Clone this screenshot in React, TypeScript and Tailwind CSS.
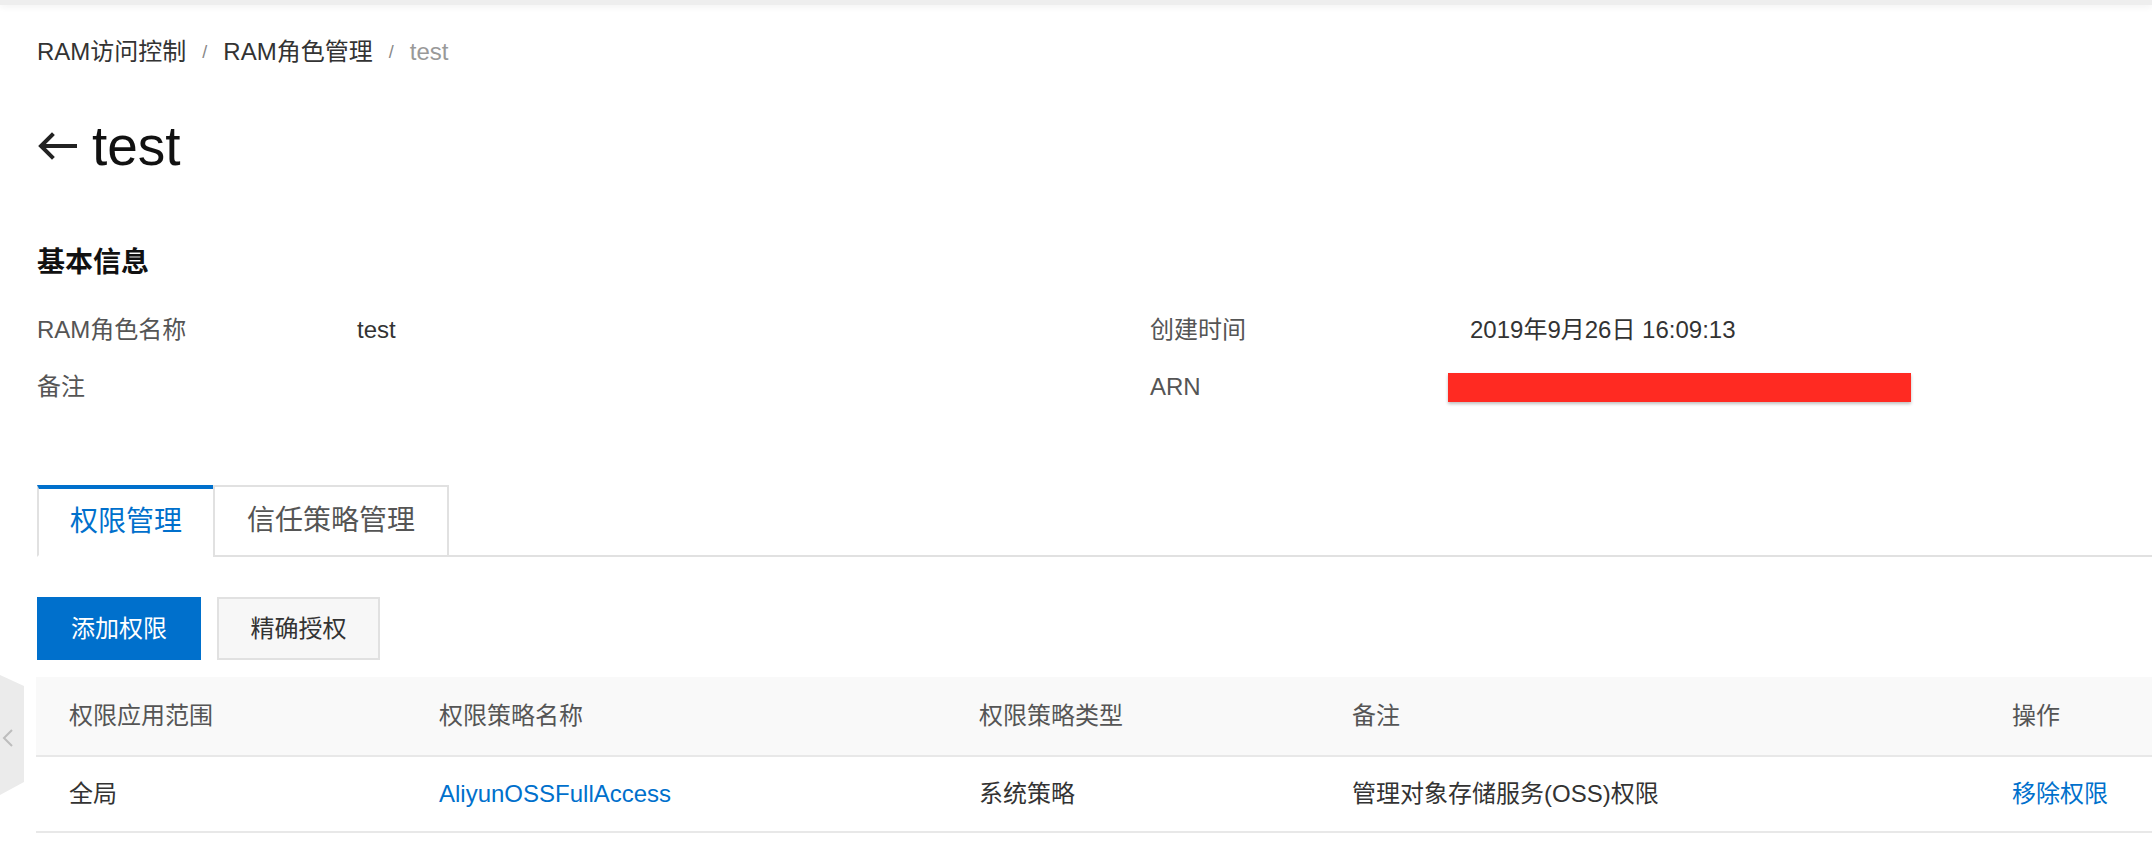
import React from 'react';

const font = { fontFamily: '"Liberation Sans", "Noto Sans CJK SC", sans-serif' };

const BackArrow: React.FC = () => (
  <svg width="40" height="28" viewBox="0 0 40 28" fill="none" stroke="#222" strokeWidth="4" strokeLinecap="square">
    <path d="M5 14 H38" />
    <path d="M15 3 L4 14 L15 25" />
  </svg>
);

interface InfoItem {
  label: string;
  value?: React.ReactNode;
}

const InfoCell: React.FC<InfoItem> = ({ label, value }) => (
  <div className="flex items-center h-[57px]">
    <div className="w-[320px] text-[24px] leading-[32px] text-[#555]">{label}</div>
    <div className="text-[24px] leading-[32px] text-[#333]">{value}</div>
  </div>
);

const columns = ['权限应用范围', '权限策略名称', '权限策略类型', '备注', '操作'];

export default function App() {
  return (
    <div className="relative min-h-screen bg-white overflow-hidden" style={font}>
      <div className="h-[5px] bg-[#eeeeee] shadow-[0_2px_6px_rgba(0,0,0,0.06)]" />

      {/* collapse handle on the left edge */}
      <div className="absolute left-0 top-[675px] w-[24px] h-[120px] bg-[#ebebeb] [clip-path:polygon(0_0,100%_11px,100%_107px,0_100%)] flex items-center">
        <svg width="14" height="18" viewBox="0 0 14 18" fill="none" stroke="#bdbdbd" strokeWidth="2" className="ml-[1px] mt-[6px]">
          <path d="M11 1 L3 9 L11 17" />
        </svg>
      </div>

      <div className="pl-[37px]">
        {/* breadcrumb */}
        <div className="mt-[31px] flex items-center text-[24px] leading-[32px] text-[#333]">
          <span>RAM访问控制</span>
          <span className="mx-[16px] text-[18px] text-[#888]">/</span>
          <span>RAM角色管理</span>
          <span className="mx-[16px] text-[18px] text-[#888]">/</span>
          <span className="text-[#999]">test</span>
        </div>

        {/* title */}
        <div className="mt-[51px] flex items-center h-[54px]">
          <BackArrow />
          <h1 className="ml-[15px] text-[55px] leading-[54px] text-[#111]">test</h1>
        </div>

        {/* basic info */}
        <div className="mt-[70px] text-[28px] leading-[40px] font-bold text-[#111]">基本信息</div>
        <div className="mt-[18px] grid grid-cols-[1113px_1fr]">
          <InfoCell label="RAM角色名称" value="test" />
          <InfoCell label="创建时间" value="2019年9月26日 16:09:13" />
          <InfoCell label="备注" />
          <InfoCell
            label="ARN"
            value={<div className="-ml-[22px] mt-[2px] w-[463px] h-[29px] bg-[#ff2a22] shadow-[0_2px_3px_rgba(0,0,0,0.25)]" />}
          />
        </div>

        {/* tabs */}
        <div className="mt-[70px] flex border-b-2 border-[#e1e1e1]">
          <div className="-mb-[2px] w-[178px] h-[72px] flex items-center justify-center border-2 border-t-4 border-[#e1e1e1] border-t-[#0070cc] border-b-white bg-white text-[28px] text-[#0070cc]">
            权限管理
          </div>
          <div className="-mb-[2px] -ml-[2px] w-[236px] h-[72px] flex items-center justify-center border-2 border-[#e1e1e1] bg-white text-[28px] text-[#555]">
            信任策略管理
          </div>
        </div>

        {/* actions */}
        <div className="mt-[40px] flex gap-[16px]">
          <button className="w-[164px] h-[63px] bg-[#0070cc] text-white text-[24px]">添加权限</button>
          <button className="w-[163px] h-[63px] bg-[#f7f7f7] border-2 border-[#e1e1e1] text-[#333] text-[24px]">精确授权</button>
        </div>

        {/* policy table */}
        <div className="mt-[17px] -ml-[1px]">
          <div className="grid grid-cols-[370px_540px_373px_660px_1fr] h-[80px] items-center bg-[#f9f9f9] border-b-2 border-[#e8e8e8] text-[24px] text-[#555]">
            {columns.map((c) => (
              <div key={c} className="pl-[33px]">{c}</div>
            ))}
          </div>
          <div className="grid grid-cols-[370px_540px_373px_660px_1fr] h-[76px] items-center border-b-2 border-[#e8e8e8] text-[24px] text-[#333]">
            <div className="pl-[33px]">全局</div>
            <div className="pl-[33px] text-[#0070cc]">AliyunOSSFullAccess</div>
            <div className="pl-[33px]">系统策略</div>
            <div className="pl-[33px]">管理对象存储服务(OSS)权限</div>
            <div className="pl-[33px] text-[#0070cc]">移除权限</div>
          </div>
        </div>
      </div>
    </div>
  );
}
